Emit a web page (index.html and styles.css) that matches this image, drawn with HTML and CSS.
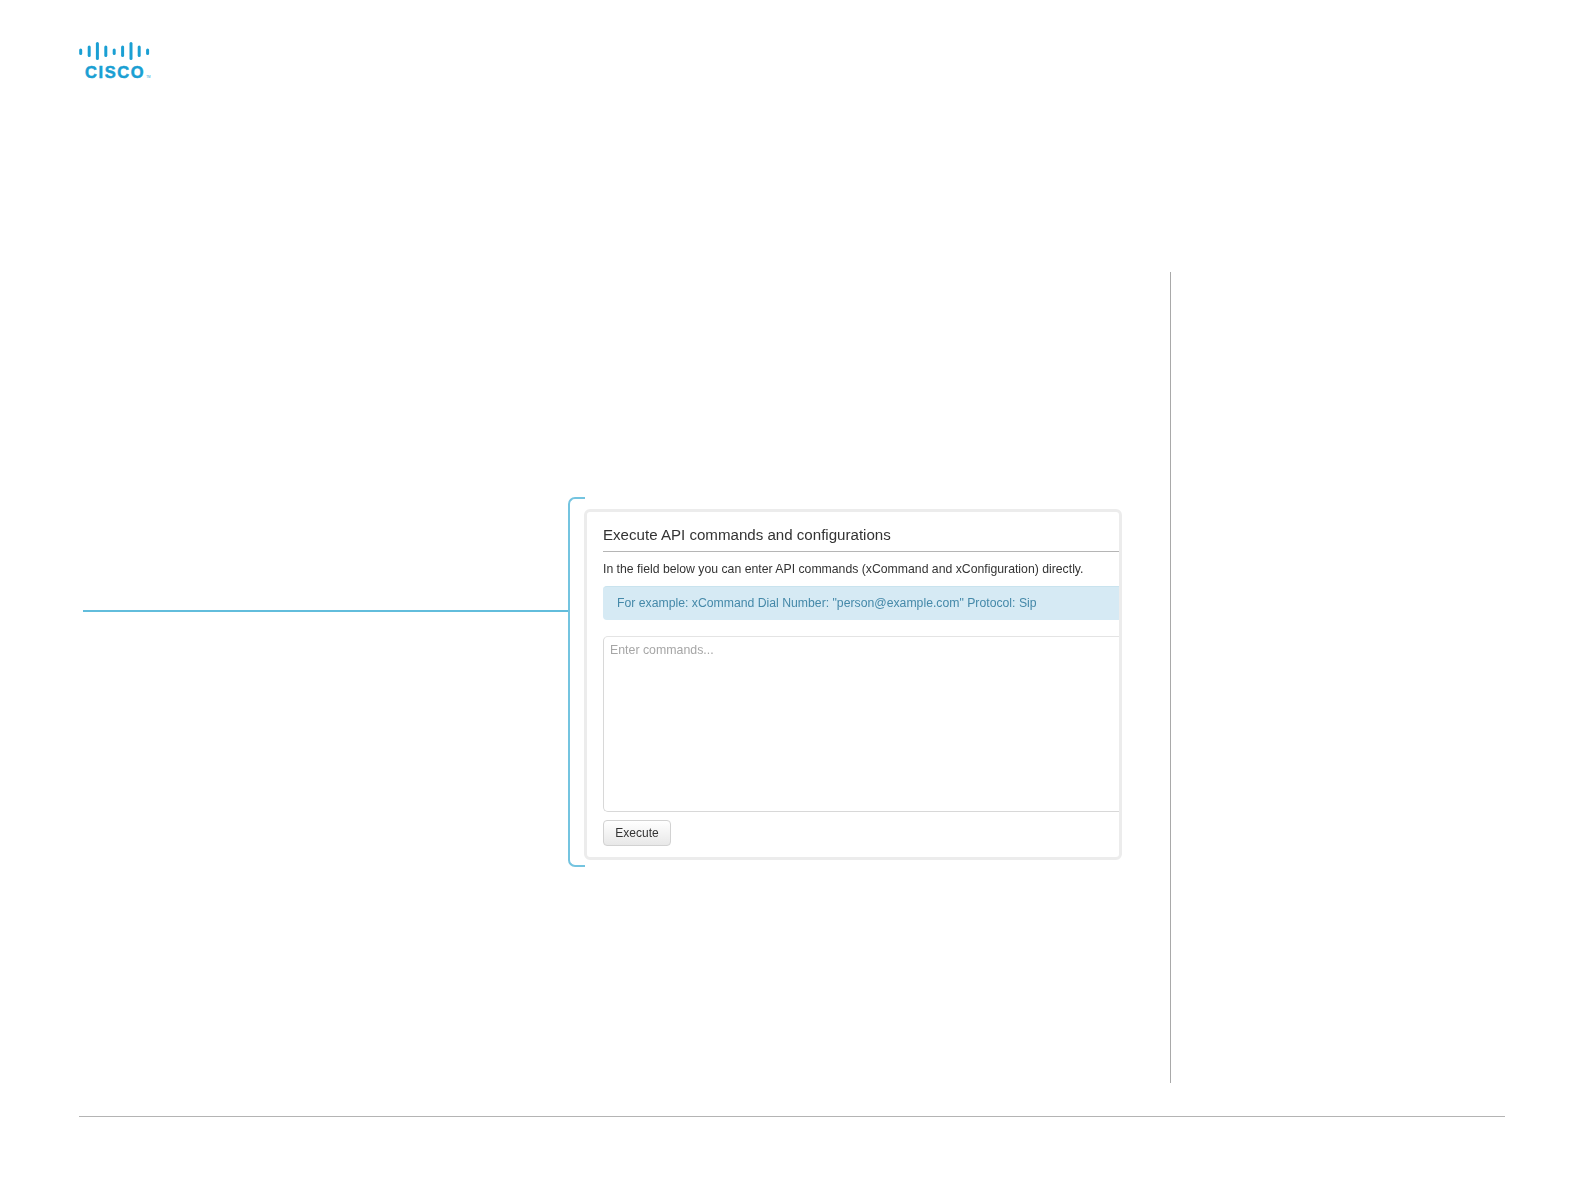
FILE: index.html
```html
<!DOCTYPE html>
<html lang="en">
<head>
<meta charset="utf-8">
<title>Execute API commands and configurations</title>
<link rel="stylesheet" href="styles.css">
</head>
<body>
<div class="page">
  <header class="brand">
    <svg class="brand-bars" width="72" height="18" viewBox="0 0 72 18" aria-hidden="true">
      <g stroke="#1a9fd3" stroke-width="3" stroke-linecap="round">
        <line x1="1.7" y1="8" x2="1.7" y2="11.5"/>
        <line x1="10.2" y1="5" x2="10.2" y2="13.5"/>
        <line x1="18.4" y1="1.6" x2="18.4" y2="16.4"/>
        <line x1="26.8" y1="5" x2="26.8" y2="13.5"/>
        <line x1="35.2" y1="8" x2="35.2" y2="11.5"/>
        <line x1="43.6" y1="5" x2="43.6" y2="13.5"/>
        <line x1="52" y1="1.6" x2="52" y2="16.4"/>
        <line x1="60.2" y1="5" x2="60.2" y2="13.5"/>
        <line x1="68.6" y1="8" x2="68.6" y2="11.5"/>
      </g>
    </svg>
    <div class="brand-name">CISCO<span class="brand-tm">TM</span></div>
  </header>

  <main class="content">
    <div class="callout">
      <div class="leader"></div>
      <div class="bracket"></div>
      <section class="panel">
        <h2 class="panel-title">Execute API commands and configurations</h2>
        <p class="panel-text">In the field below you can enter API commands (xCommand and xConfiguration) directly.</p>
        <div class="alert">For example: xCommand Dial Number: "person@example.com" Protocol: Sip</div>
        <div class="command-box">Enter commands...</div>
        <button class="execute" type="button">Execute</button>
      </section>
    </div>
  </main>

  <footer class="footer"></footer>
</div>
</body>
</html>
```

FILE: styles.css
```css
* { box-sizing: border-box; }
html, body { margin: 0; padding: 0; background: #fff; }
body { font-family: "Liberation Sans", Arial, sans-serif; color: #333; }

.page {
  width: 1584px;
  height: 1191px;
  padding: 42px 79px 0;
  overflow: hidden;
}

.brand { height: 230px; }
.brand-bars { display: block; }
.brand-name {
  margin: 4px 0 0 6px;
  font-size: 16.5px;
  line-height: 16px;
  font-weight: 700;
  letter-spacing: 1.6px;
  color: #1a9fd3;
  -webkit-text-stroke: 0.5px #1a9fd3;
}
.brand-tm { font-size: 3px; font-weight: 400; letter-spacing: 0; margin-left: 1px; -webkit-text-stroke: 0; }

.content {
  width: 1092px;
  height: 811px;
  padding-top: 225px;
  border-right: 1px solid #a9a9a9;
}

.callout { display: flex; align-items: flex-start; filter: blur(0.3px); }
.leader {
  width: 485px;
  margin: 113px 0 0 4px;
  border-top: 2px solid #62bddc;
}
.bracket {
  width: 17px;
  height: 370px;
  border: 2px solid #74c4e0;
  border-right: 0;
  border-radius: 7px 0 0 7px;
}
.panel {
  width: 538px;
  height: 351px;
  margin: 12px 0 0 -1px;
  padding-left: 16px;
  border: 3px solid #ececec;
  border-radius: 6px;
  overflow: hidden;
  background: #fff;
}
.panel-title {
  margin: 0;
  height: 40px;
  padding-top: 14px;
  border-bottom: 1px solid #b5b5b5;
  font-size: 15.1px;
  line-height: 18px;
  font-weight: 400;
  color: #333;
}
.panel-text {
  margin: 0;
  height: 34px;
  padding-top: 9px;
  font-size: 12.26px;
  line-height: 16px;
  color: #333;
}
.alert {
  height: 34px;
  padding-left: 14px;
  border-radius: 4px 0 0 4px;
  background: #d6eaf4;
  border-top: 1px solid #c9e3ee;
  font-size: 12.24px;
  line-height: 33px;
  color: #4589a9;
}
.command-box {
  height: 176px;
  margin-top: 16px;
  padding: 5px 0 0 6px;
  border: 1px solid #d8d8d8;
  border-right: 0;
  border-top-color: #e4e4e4;
  border-radius: 5px 0 0 5px;
  font-size: 12.35px;
  line-height: 16px;
  color: #a6a6a6;
}
.execute {
  display: block;
  width: 68px;
  height: 26px;
  margin-top: 8px;
  padding: 0;
  border: 1px solid #d2d2d2;
  border-radius: 4px;
  background: linear-gradient(#fff, #e8e8e8);
  font-family: inherit;
  font-size: 12px;
  color: #333;
}

.footer {
  margin-top: 33px;
  border-top: 1px solid #b4b4b4;
  width: 1426px;
}
```
